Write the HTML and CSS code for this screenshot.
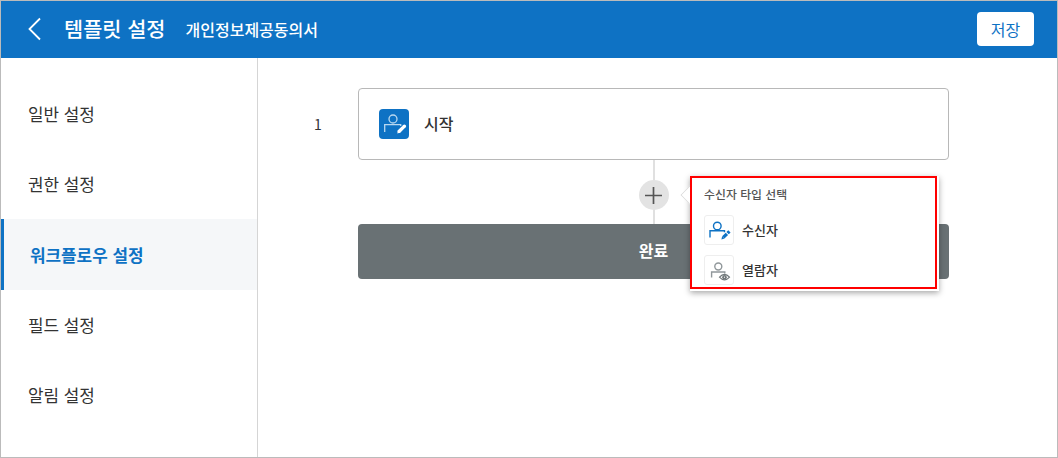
FILE: index.html
```html
<!DOCTYPE html>
<html lang="ko">
<head>
<meta charset="utf-8">
<title>템플릿 설정</title>
<link rel="stylesheet" href="styles.css">
</head>
<body>
<div class="app">
  <header class="header">
    <svg class="back" width="14" height="24" viewBox="0 0 14 24" fill="none" stroke="#fff" stroke-width="1.8"><path d="M13 1.500 2.500 12 13 22.500"/></svg>
    <h1 class="title">템플릿 설정</h1>
    <span class="subtitle">개인정보제공동의서</span>
    <button class="save">저장</button>
  </header>
  <div class="body">
    <nav class="sidebar">
      <a class="item">일반 설정</a>
      <a class="item">권한 설정</a>
      <a class="item active">워크플로우 설정</a>
      <a class="item">필드 설정</a>
      <a class="item">알림 설정</a>
    </nav>
    <main class="main">
      <span class="step">1</span>
      <div class="flow">
        <div class="card">
          <span class="card-icon">
            <svg width="30" height="30" viewBox="0 0 30 30" fill="none"><g stroke="#b9d8f0" stroke-width="1.300"><circle cx="14" cy="10" r="4"/><path d="M5.700 23v-7.400h16v1.500"/></g><path d="m20.300 22.300 3.400-3.400m1.100-1.100.6-.6" stroke="#fff" stroke-width="3.400" stroke-linecap="round"/><path d="m18.800 21 2.600 2.600-3 .8z" fill="#fff"/></svg>
          </span>
          <span class="card-label">시작</span>
        </div>
        <div class="connector">
          <span class="add"><svg width="17" height="17" viewBox="0 0 17 17" stroke="#555" stroke-width="1.700"><path d="M8.500 0v17M0 8.500h17"/></svg></span>
          <div class="popup">
            <div class="popup-title">수신자 타입 선택</div>
            <div class="option">
              <span class="option-icon"><svg width="28" height="28" viewBox="0 0 28 28" fill="none"><g stroke="#0e72c4" stroke-width="1.400"><circle cx="12.300" cy="10" r="3.800"/><path d="M5 21.500v-6.700h14.500v1.500"/></g><path d="m18.300 21.400 3.600-3.600m.7-.7 1.800-1.800" stroke="#0e72c4" stroke-width="3.300"/><path d="m17.100 20.200 2.400 2.400-3.100.9z" fill="#0e72c4"/></svg></span>
              <span class="option-label">수신자</span>
            </div>
            <div class="option">
              <span class="option-icon"><svg width="28" height="28" viewBox="0 0 28 28" fill="none"><g stroke="#90979a" stroke-width="1.400"><circle cx="13.300" cy="10.500" r="3.500"/><path d="M6.600 21.500v-5.500h13.200v1.500"/></g><path d="M14.500 21.200q5-5.500 10 0-5 5.500-10 0z" fill="#fff" stroke="#71787b" stroke-width="1.200"/><circle cx="19.500" cy="21.200" r="2.300" fill="#71787b"/><circle cx="19.500" cy="21.200" r=".6" fill="#fff"/></svg></span>
              <span class="option-label">열람자</span>
            </div>
          </div>
        </div>
        <div class="done">완료</div>
      </div>
    </main>
  </div>
</div>
</body>
</html>
```
FILE: styles.css
```css
* { box-sizing: border-box; }
body {
  margin: 0;
  font-family: "Noto Sans CJK KR", sans-serif;
  color: #333;
  background: #fff;
}
.app {
  height: 458px;
  border: 1px solid #bbb;
  display: flex;
  flex-direction: column;
  overflow: hidden;
}
.header {
  flex: none;
  height: 57px;
  background: #0e72c4;
  color: #fff;
  display: flex;
  align-items: center;
  padding: 0 23px 2px 26px;
}
.title {
  margin: 0 0 2px 23px;
  font-size: 20.800px;
  font-weight: 500;
  line-height: 30px;
}
.subtitle {
  margin-left: 20px;
  font-size: 16px;
  font-weight: 500;
  line-height: 24px;
}
.save {
  margin-left: auto;
  width: 57px;
  height: 34px;
  padding: 0;
  border: 0;
  border-radius: 4px;
  background: #fff;
  color: #0e72c4;
  font: 400 16px/24px "Noto Sans CJK KR", sans-serif;
}
.body {
  flex: 1;
  display: flex;
}
.sidebar {
  width: 257px;
  border-right: 1px solid #d5d5d5;
  padding-top: 21px;
}
.item {
  display: flex;
  align-items: center;
  height: 70px;
  padding: 0 0 1px 27px;
  font-size: 16.900px;
}
.active {
  height: 71px;
  margin-bottom: -1px;
  border-left: 3px solid #0e72c4;
  padding: 0 0 1px 26px;
  background: #f5f7f9;
  color: #0e72c4;
  font-weight: 700;
}
.active ~ .item { padding-bottom: 0; }
.main {
  flex: 1;
  display: flex;
  padding: 30px 0 0 56px;
}
.step {
  width: 44px;
  height: 72px;
  font-size: 14px;
  line-height: 72px;
}
.flow { width: 591px; }
.card {
  height: 72px;
  border: 1px solid #b8b8b8;
  border-radius: 4px;
  display: flex;
  align-items: center;
  padding-left: 20px;
}
.card-icon {
  width: 30px;
  height: 30px;
  border-radius: 4px;
  background: #0e72c4;
}
.card-icon svg, .option-icon svg { display: block; }
.card-label {
  margin: 0 0 2px 15px;
  font-size: 16px;
  font-weight: 500;
}
.connector {
  position: relative;
  height: 64px;
  display: flex;
  justify-content: center;
  padding-top: 20px;
  background: linear-gradient(#e0e0e0, #e0e0e0) 295px 0 / 2px 100% no-repeat;
}
.add {
  width: 30px;
  height: 30px;
  border-radius: 50%;
  background: #e3e3e3;
  display: flex;
  align-items: center;
  justify-content: center;
}
.popup {
  position: absolute;
  left: 332px;
  top: 16px;
  width: 247px;
  height: 113px;
  border: 2px solid #f00;
  background: #fff;
  box-shadow: 1px 1px 0 1px #fff, 1px 3px 6px 1px rgba(0, 0, 0, .35);
  padding: 7px 0 0 12px;
}
.popup::before {
  content: "";
  position: absolute;
  left: -9px;
  top: 10px;
  width: 13px;
  height: 13px;
  border: 1px solid #ddd;
  border-width: 0 0 1px 1px;
  background: #fff;
  transform: rotate(45deg);
  clip-path: polygon(0 0, 100% 100%, 0 100%);
}
.popup-title {
  font-size: 11.900px;
  line-height: 17px;
  height: 30px;
  color: #555;
  font-weight: 500;
}
.option {
  display: flex;
  align-items: center;
  height: 30px;
  margin-bottom: 10px;
}
.option-icon {
  width: 30px;
  height: 30px;
  border: 1px solid #eee;
  border-radius: 3px;
}
.option-label {
  margin: 0 0 1px 8px;
  font-size: 13px;
  font-weight: 500;
}
.done {
  height: 55px;
  border-radius: 4px;
  background: #697174;
  color: #fff;
  font-size: 16px;
  font-weight: 700;
  line-height: 53px;
  text-align: center;
}
```
